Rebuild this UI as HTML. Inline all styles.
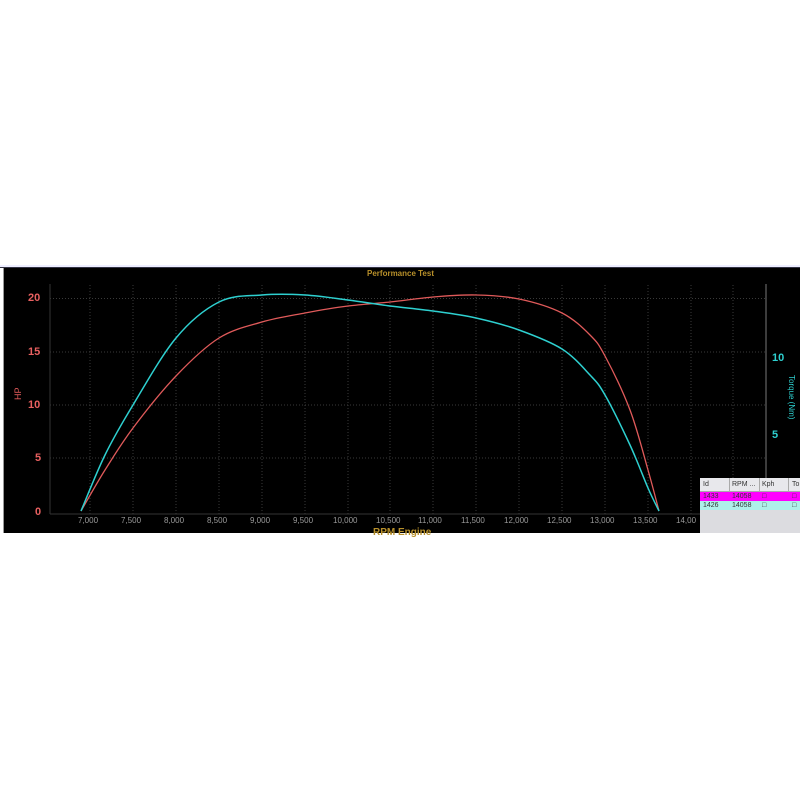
<!DOCTYPE html><html><head><style>
body{margin:0;width:800px;height:800px;background:#fff;position:relative;overflow:hidden;font-family:"Liberation Sans",sans-serif}
.t{position:absolute;font-size:8px;}
</style></head><body>
<div style="position:absolute;left:0;top:265px;width:800px;height:2px;background:#eef;border-bottom:1px solid #334"></div>
<div style="position:absolute;left:3px;top:268px;width:797px;height:265px;background:#000;border-left:1px solid #999"></div>
<svg style="position:absolute;left:0;top:0" width="800" height="800">
<g stroke="#3a3a3a" stroke-dasharray="1,2" stroke-width="1">
<line x1="50" y1="298.5" x2="766" y2="298.5"/><line x1="50" y1="352" x2="766" y2="352"/><line x1="50" y1="405" x2="766" y2="405"/><line x1="50" y1="458" x2="766" y2="458"/>
<line x1="90" y1="285" x2="90" y2="514"/><line x1="133" y1="285" x2="133" y2="514"/><line x1="176" y1="285" x2="176" y2="514"/><line x1="219" y1="285" x2="219" y2="514"/><line x1="262" y1="285" x2="262" y2="514"/><line x1="305" y1="285" x2="305" y2="514"/><line x1="348" y1="285" x2="348" y2="514"/><line x1="390" y1="285" x2="390" y2="514"/><line x1="433" y1="285" x2="433" y2="514"/><line x1="476" y1="285" x2="476" y2="514"/><line x1="519" y1="285" x2="519" y2="514"/><line x1="562" y1="285" x2="562" y2="514"/><line x1="605" y1="285" x2="605" y2="514"/><line x1="648" y1="285" x2="648" y2="514"/><line x1="691" y1="285" x2="691" y2="514"/><line x1="733" y1="285" x2="733" y2="514"/>
</g>
<line x1="50" y1="284" x2="50" y2="514" stroke="#333"/>
<line x1="50" y1="514" x2="766" y2="514" stroke="#333"/>
<line x1="766" y1="284" x2="766" y2="514" stroke="#777"/>
<path id="red" d="M81,511 L133,428 L176,378 L219,338 L262,322 L305,313 L348,306 L390,302 L433,297 L476,295 L519,299 L562,313 L605,356 L630,410 L648,470 L659,511" fill="none" stroke="#e05a5a" stroke-width="1.3"/>
<path id="cy" d="M81,511 L133,405 L176,338 L219,302 L262,295 L305,295 L348,300 L390,306 L433,311 L476,318 L519,330 L562,349 L605,395 L630,445 L648,488 L659,511" fill="none" stroke="#2ed0d0" stroke-width="1.5"/>
<text x="17" y="404" fill="#e05a5a" font-size="9" transform="rotate(-90 17 400)" font-family="Liberation Sans">HP</text>
<text x="789" y="375" fill="#2ed0d0" font-size="8" transform="rotate(90 789 375)" font-family="Liberation Sans">Torque (Nm)</text>
</svg>
<script>
function cr(p){var d="M"+p[0][0]+","+p[0][1];for(var i=0;i<p.length-1;i++){var a=p[i-1]||p[i],b=p[i],c=p[i+1],e=p[i+2]||c;
d+=" C"+(b[0]+(c[0]-a[0])/6).toFixed(1)+","+(b[1]+(c[1]-a[1])/6).toFixed(1)+" "+(c[0]-(e[0]-b[0])/6).toFixed(1)+","+(c[1]-(e[1]-b[1])/6).toFixed(1)+" "+c[0]+","+c[1];}return d;}
var r=[[81,511],[105,470],[133,428],[176,376],[219,338],[262,322],[305,313],[348,306],[390,302],[433,297],[476,295],[519,299],[562,313],[590,335],[605,356],[630,410],[648,470],[659,511]];
var c=[[81,511],[105,455],[133,405],[176,338],[219,302],[262,295],[305,295],[348,300],[390,306],[433,311],[476,318],[519,330],[562,349],[590,375],[605,395],[630,445],[648,488],[659,511]];
document.getElementById("red").setAttribute("d",cr(r));document.getElementById("cy").setAttribute("d",cr(c));
</script>
<div class="t" style="left:367px;top:269px;color:#b8902a;font-weight:bold">Performance Test</div>
<div class="t" style="left:28px;top:292px;color:#e86060;font-size:11px;font-weight:bold">20</div>
<div class="t" style="left:28px;top:346px;color:#e86060;font-size:11px;font-weight:bold">15</div>
<div class="t" style="left:28px;top:399px;color:#e86060;font-size:11px;font-weight:bold">10</div>
<div class="t" style="left:35px;top:452px;color:#e86060;font-size:11px;font-weight:bold">5</div>
<div class="t" style="left:35px;top:506px;color:#e86060;font-size:11px;font-weight:bold">0</div>
<div class="t" style="left:772px;top:352px;color:#2ed0d0;font-size:11px;font-weight:bold">10</div>
<div class="t" style="left:772px;top:429px;color:#2ed0d0;font-size:11px;font-weight:bold">5</div>
<div style="position:absolute;left:0;top:516px;color:#999;font-size:8px">
<span style="position:absolute;left:78px">7,000</span><span style="position:absolute;left:121px">7,500</span><span style="position:absolute;left:164px">8,000</span><span style="position:absolute;left:207px">8,500</span><span style="position:absolute;left:250px">9,000</span><span style="position:absolute;left:293px">9,500</span><span style="position:absolute;left:333px">10,000</span><span style="position:absolute;left:376px">10,500</span><span style="position:absolute;left:418px">11,000</span><span style="position:absolute;left:461px">11,500</span><span style="position:absolute;left:504px">12,000</span><span style="position:absolute;left:547px">12,500</span><span style="position:absolute;left:590px">13,000</span><span style="position:absolute;left:633px">13,500</span><span style="position:absolute;left:676px">14,00</span></div>
<div class="t" style="left:373px;top:527px;color:#b8902a;font-size:10px;font-weight:bold">RPM Engine</div>
<div style="position:absolute;left:700px;top:478px;width:100px;height:55px;background:#dcdce0;font-size:7px;color:#333">
<div style="height:13px;line-height:13px;background:#e8e8ec;border-bottom:1px solid #aaa;position:relative"><span style="position:absolute;left:3px">Id</span><span style="position:absolute;left:32px">RPM ...</span><span style="position:absolute;left:62px">Kph</span><span style="position:absolute;left:92px">To</span><i style="position:absolute;left:29px;top:0;height:13px;border-left:1px solid #aaa"></i><i style="position:absolute;left:59px;top:0;height:13px;border-left:1px solid #aaa"></i><i style="position:absolute;left:88px;top:0;height:13px;border-left:1px solid #aaa"></i></div>
<div style="height:9px;line-height:9px;background:#ff00ff;position:relative"><span style="position:absolute;left:3px">1433</span><span style="position:absolute;left:32px">14058</span><span style="position:absolute;left:62px">□</span><span style="position:absolute;left:92px">□</span></div>
<div style="height:9px;line-height:9px;background:#aef0ea;position:relative"><span style="position:absolute;left:3px">1426</span><span style="position:absolute;left:32px">14058</span><span style="position:absolute;left:62px">□</span><span style="position:absolute;left:92px">□</span></div>
</div>
</body></html>
